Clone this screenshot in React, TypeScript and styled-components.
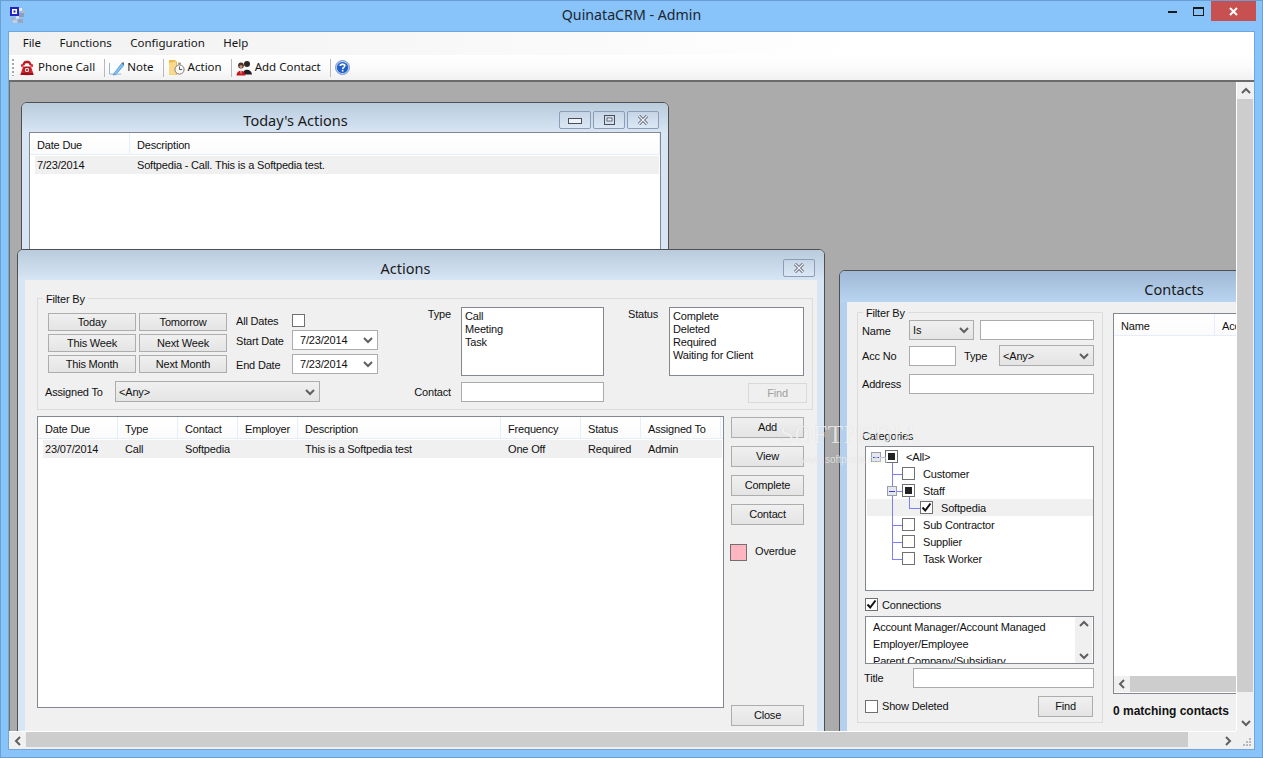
import React from 'react';
import styled, { createGlobalStyle } from 'styled-components';

const GlobalStyle = createGlobalStyle`
  html, body { margin: 0; padding: 0; height: 100%; overflow: hidden; }
  body { font-family: "Liberation Sans", Arial, sans-serif; font-size: 11px; letter-spacing: -0.18px; color: #111; }
  * { box-sizing: border-box; }
`;

const uiFont = `"Noto Sans", "Liberation Sans", sans-serif`;

const AppFrame = styled.div`
  position: relative;
  width: 1263px;
  height: 758px;
  background: #88c3f9;
  border: 1px solid #6a9fd4;
  display: flex;
  flex-direction: column;
  overflow: hidden;
`;

const TitleBar = styled.div`
  height: 30px;
  display: flex;
  align-items: flex-start;
  flex: none;
`;

const AppIcon = styled.svg`
  width: 17px;
  height: 17px;
  margin: 6px 0 0 8px;
  flex: none;
`;

const AppTitle = styled.div`
  flex: 1;
  text-align: center;
  font: 14.2px/28px ${uiFont};
  letter-spacing: 0;
  padding-left: 78px;
  color: #1c2530;
`;

const CaptionButtons = styled.div`
  display: flex;
  align-items: flex-start;
  margin-right: 6px;
`;

const CaptionButton = styled.div<{ $close?: boolean }>`
  width: ${p => (p.$close ? 45 : 26)}px;
  height: 20px;
  display: flex;
  align-items: center;
  justify-content: center;
  background: ${p => (p.$close ? '#c75050' : 'transparent')};
`;

const Client = styled.div`
  flex: 1;
  margin: 0 7px 7px 7px;
  border: 1px solid #6fa6dc;
  background: #f0f0f0;
  display: flex;
  flex-direction: column;
  min-height: 0;
`;

const MenuBar = styled.div`
  height: 23px;
  display: flex;
  align-items: flex-start;
  padding-left: 4.5px;
  background: linear-gradient(90deg, #f1f1f1, #ffffff 70%);
  flex: none;
`;

const MenuItem = styled.div`
  padding: 0 9.2px;
  font: 11.5px/21px ${uiFont};
  letter-spacing: 0;
  color: #151515;
`;

const ToolBar = styled.div`
  height: 25px;
  display: flex;
  align-items: center;
  padding-left: 3px;
  background: linear-gradient(#ffffff, #fbfbfb 50%, #f1f1f1);
  border-radius: 0 0 3px 3px;
  flex: none;
`;

const Grip = styled.div`
  width: 2px;
  height: 17px;
  margin-right: 6px;
  background: repeating-linear-gradient(#a9a9a9 0 2px, transparent 2px 4px);
`;

const ToolItem = styled.div`
  display: flex;
  align-items: center;
  gap: 3px;
  font: 11.5px/20px ${uiFont};
  letter-spacing: 0;
  color: #151515;
`;

const ToolLabel = styled.span`
  margin-top: -2px;
`;

const ToolSep = styled.div`
  width: 1px;
  height: 18px;
  background: #b9b9b9;
  margin: 0 4px 0 9px;
`;

const MdiArea = styled.div`
  flex: 1;
  min-height: 0;
  display: grid;
  grid-template-columns: 1fr 18px;
  grid-template-rows: 1fr 18px;
  border-top: 2px solid #6b6b6b;
  background: #f0f0f0;
`;

const Desktop = styled.div`
  position: relative;
  overflow: hidden;
  background: #ababab;
  border-left: 1px solid #6f6f6f;
`;

const VScroll = styled.div`
  display: flex;
  flex-direction: column;
  background: #f0f0f0;
  border-left: 1px solid #fff;
  padding-right: 1px;
`;

const HScroll = styled.div`
  display: flex;
  background: #f0f0f0;
  border-top: 1px solid #fff;
  padding-bottom: 2px;
`;

const ArrowBox = styled.div<{ $size?: number }>`
  flex: none;
  width: ${p => p.$size ?? 17}px;
  height: ${p => p.$size ?? 17}px;
  display: flex;
  align-items: center;
  justify-content: center;
  background: #f0f0f0;
`;

const Thumb = styled.div<{ $len: number; $vertical?: boolean }>`
  background: #cdcdcd;
  flex: none;
  ${p => (p.$vertical ? `height: ${p.$len}px;` : `width: ${p.$len}px;`)}
`;

const Spring = styled.div`
  flex: 1;
`;

const TrackFill = styled.div`
  flex: 1;
  background: #cdcdcd;
`;

const CornerGrip = styled.div`
  display: flex;
  align-items: flex-end;
  justify-content: flex-end;
  padding: 0 3px 3px 0;
`;

const MdiWindow = styled.div<{ $left: number; $top: number; $w: number; $h: number; $active?: boolean }>`
  position: absolute;
  left: ${p => p.$left}px;
  top: ${p => p.$top}px;
  width: ${p => p.$w}px;
  height: ${p => p.$h}px;
  border: 1px solid #4f4f4f;
  border-radius: 6px 6px 0 0;
  background: ${p => (p.$active ? '#b5d0ee' : '#d7e5f4')};
  display: flex;
  flex-direction: column;
  padding: 0 7px;
`;

const WindowHead = styled.div<{ $active?: boolean; $h: number }>`
  height: ${p => p.$h}px;
  margin: 0 -7px;
  padding: 0 9px 0 0;
  flex: none;
  display: flex;
  align-items: flex-start;
  border-radius: 5px 5px 0 0;
  background: ${p => (p.$active
    ? 'linear-gradient(#9fb8d5, #b9d4f0)'
    : 'linear-gradient(#b9cbdc, #d7e5f4)')};
`;

const WindowTitle = styled.div<{ $shift?: number; $lh?: number }>`
  flex: 1;
  text-align: center;
  padding-left: 10px;
  padding-right: ${p => p.$shift ?? 0}px;
  font: 14.5px/${p => p.$lh ?? 34}px ${uiFont};
  letter-spacing: 0;
  color: #1a1a1a;
`;

const WindowButtons = styled.div<{ $top: number }>`
  display: flex;
  gap: 2px;
  margin-top: ${p => p.$top}px;
`;

const WindowButton = styled.div`
  width: 32px;
  height: 18px;
  border: 1px solid #8d9db8;
  border-radius: 2px;
  background: linear-gradient(#c6d5e6, #dbe7f4);
  display: flex;
  align-items: center;
  justify-content: center;
`;

const Body = styled.div<{ $pad: string }>`
  flex: 1;
  min-height: 0;
  background: #f0f0f0;
  padding: ${p => p.$pad};
`;

const Group = styled.div<{ $w: number; $h: number }>`
  position: relative;
  flex: none;
  width: ${p => p.$w}px;
  height: ${p => p.$h}px;
  border: 1px solid #dcdcdc;
`;

const Legend = styled.span`
  position: absolute;
  top: -7px;
  left: 5px;
  padding: 0 3px;
  background: #f0f0f0;
  line-height: 14px;
`;

const ActionsFilter = styled.div`
  display: flex;
  height: 100%;
  padding-left: 7px;
`;

const DatesColumn = styled.div`
  width: 333px;
  flex: none;
  padding-top: 14px;
`;

const DatesRow = styled.div`
  display: flex;
  margin-left: 3px;
`;

const QuickButtons = styled.div`
  display: grid;
  grid-template-columns: 88px 88px;
  grid-template-rows: repeat(3, 18px);
  gap: 3px;
`;

const DateFields = styled.div`
  display: grid;
  grid-template-columns: 56px 86px;
  grid-template-rows: 13px 20px 20px;
  row-gap: 4px;
  margin-left: 9px;
  align-items: center;
`;

const AssignedRow = styled.div`
  display: flex;
  align-items: center;
  margin-top: 7px;
`;

const FieldLabel = styled.label<{ $w?: number; $right?: boolean; $pad?: string }>`
  flex: none;
  ${p => (p.$w ? `width: ${p.$w}px;` : '')}
  ${p => (p.$right ? 'text-align: right;' : '')}
  ${p => (p.$pad ? `padding: ${p.$pad};` : '')}
  white-space: nowrap;
`;

const TypeStatusGrid = styled.div`
  display: grid;
  grid-template-columns: 83px 143px 65px 135px;
  grid-template-rows: 69px 20px;
  row-gap: 6px;
  margin-top: 8px;
`;

const WinButton = styled.div<{ $w?: number; $h?: number; $disabled?: boolean }>`
  ${p => (p.$w ? `width: ${p.$w}px;` : '')}
  ${p => (p.$h ? `height: ${p.$h}px;` : '')}
  flex: none;
  display: flex;
  align-items: center;
  justify-content: center;
  border: 1px solid ${p => (p.$disabled ? '#d9d9d9' : '#adadad')};
  background: ${p => (p.$disabled ? '#efefef' : 'linear-gradient(#f0f0f0, #e4e4e4)')};
  color: ${p => (p.$disabled ? '#a0a0a0' : '#111')};
`;

const FindSlot = styled.div`
  justify-self: end;
  margin-right: -3px;
  margin-top: 1px;
`;

const ListBox = styled.div`
  border: 1px solid #828790;
  background: #fff;
  padding: 2px 3px;
  line-height: 13px;
`;

const TextBox = styled.div<{ $w?: number; $h?: number; $ml?: number }>`
  ${p => (p.$w ? `width: ${p.$w}px;` : '')}
  height: ${p => p.$h ?? 20}px;
  margin-left: ${p => p.$ml ?? 0}px;
  flex: none;
  background: #fff;
  border: 1px solid #ababab;
`;

const Select = styled.div<{ $w?: number; $h?: number; $flat?: boolean }>`
  ${p => (p.$w ? `width: ${p.$w}px;` : '')}
  height: ${p => p.$h ?? 20}px;
  flex: none;
  display: flex;
  align-items: center;
  justify-content: space-between;
  padding: 0 4px 0 ${p => (p.$flat ? 7 : 3)}px;
  border: 1px solid #acacac;
  background: ${p => (p.$flat ? '#fff' : 'linear-gradient(#f0f0f0, #e4e4e4)')};
`;

const CheckBox = styled.div<{ $mt?: number }>`
  width: 13px;
  height: 13px;
  flex: none;
  border: 1px solid #707070;
  background: #fff;
  display: flex;
  align-items: center;
  justify-content: center;
  ${p => (p.$mt ? `margin-top: ${p.$mt}px;` : '')}
`;

const LowerRow = styled.div`
  display: flex;
  height: 310px;
  margin-top: 6px;
`;

const SideButtons = styled.div`
  display: flex;
  flex-direction: column;
  width: 73px;
  margin-left: 7px;
  padding-top: 1px;
  gap: 8px;
`;

const SideButton = styled(WinButton)`
  height: 21px;
  padding-bottom: 2px;
`;

const CloseSlot = styled.div`
  margin-top: auto;
`;

const OverdueRow = styled.div`
  display: flex;
  align-items: center;
  gap: 8px;
  margin: 11px 0 0 -1px;
`;

const OverdueText = styled.span`
  padding-bottom: 3px;
`;

const Swatch = styled.div`
  width: 17px;
  height: 17px;
  background: #ffb6c1;
  border: 1px solid #707070;
`;

const ListView = styled.div<{ $w: number; $h: number }>`
  flex: none;
  width: ${p => p.$w}px;
  height: ${p => p.$h}px;
  border: 1px solid #828790;
  background: #fff;
  position: relative;
  overflow: hidden;
`;

const ListHead = styled.div`
  display: flex;
  height: 22px;
  background: linear-gradient(#ffffff, #fbfbfb);
  border-bottom: 1px solid #e7eefb;
`;

const HeadCell = styled.div<{ $w: number }>`
  width: ${p => p.$w}px;
  flex: none;
  padding: 2px 0 0 7px;
  line-height: 21px;
  border-right: 1px solid #e7eefb;
  white-space: nowrap;
`;

const ListRow = styled.div`
  display: flex;
  height: 18px;
  margin: 1px 1px 0 0;
  background: linear-gradient(90deg, transparent 5px, #f0f0f0 5px);
`;

const RowCell = styled.div<{ $w: number }>`
  width: ${p => p.$w}px;
  flex: none;
  padding-left: 7px;
  line-height: 18px;
  white-space: nowrap;
`;

const ContactsBody = styled.div`
  display: flex;
`;

const ContactsFilter = styled.div`
  display: flex;
  flex-direction: column;
  height: 100%;
  padding: 7px 0 0 4px;
`;

const FormRow = styled.div<{ $mt?: number; $gap?: number; $ml?: number }>`
  display: flex;
  align-items: center;
  margin-top: ${p => p.$mt ?? 0}px;
  margin-left: ${p => p.$ml ?? 0}px;
  gap: ${p => p.$gap ?? 0}px;
`;

const CategoriesLabel = styled.div`
  margin-top: 35px;
  line-height: 14px;
`;

const Tree = styled.div`
  position: relative;
  width: 229px;
  height: 145px;
  margin: 3px 0 0 3px;
  padding-top: 1px;
  border: 1px solid #828790;
  background: #fff;
`;

const TreeLines = styled.svg`
  position: absolute;
  left: 0;
  top: 0;
  pointer-events: none;
`;

const TreeRow = styled.div<{ $indent: number; $selected?: boolean }>`
  display: flex;
  align-items: center;
  gap: 8px;
  height: 17px;
  padding-left: ${p => p.$indent}px;
  background: ${p => (p.$selected ? 'linear-gradient(90deg, transparent 1px, #f0f0f0 1px)' : 'transparent')};
`;

const IndentedRow = styled(FormRow)`
  margin-left: 3px;
  width: 229px;
`;

const FindButton = styled(WinButton)`
  margin-right: 1px;
  padding-bottom: 2px;
`;

const ConnList = styled.div`
  display: flex;
  width: 229px;
  height: 48px;
  margin: 5px 0 0 3px;
  border: 1px solid #828790;
  background: #fff;
  overflow: hidden;
`;

const ConnItems = styled.div`
  flex: 1;
  padding: 2px 0 0 7px;
  line-height: 17px;
  white-space: nowrap;
`;

const ConnScroll = styled.div`
  width: 17px;
  margin-right: 1px;
  display: flex;
  flex-direction: column;
  justify-content: space-between;
  align-items: center;
  padding: 3px 0;
  background: #f0f0f0;
`;

const ContactsRight = styled.div`
  margin-left: 10px;
  padding-top: 1px;
`;

const ListScroll = styled.div`
  position: absolute;
  left: 0;
  right: 0;
  bottom: 1px;
  height: 16px;
  display: flex;
  background: #f0f0f0;
`;

const MatchText = styled.div`
  margin-top: 10px;
  font-size: 12px;
  letter-spacing: 0;
  font-weight: bold;
  line-height: 14px;
`;

const Watermark = styled.div`
  position: absolute;
  left: 779px;
  top: 421px;
  pointer-events: none;
  color: rgba(255, 255, 255, 0.72);
  text-shadow: 0 0 1px rgba(0, 0, 0, 0.14);
  font: 25px/26px "Liberation Serif", serif;
  letter-spacing: 0.6px;
  small {
    display: block;
    font: 10px/12px "Liberation Sans", sans-serif;
    margin: 6px 0 0 21px;
    letter-spacing: 0;
  }
`;

type Dir = 'up' | 'down' | 'left' | 'right';

const arrowPaths: Record<Dir, string> = {
  up: 'M1 6 L5 2 L9 6',
  down: 'M1 2 L5 6 L9 2',
  left: 'M6 1 L2 5 L6 9',
  right: 'M2 1 L6 5 L2 9',
};

function Arrow({ dir, color = '#606060' }: { dir: Dir; color?: string }) {
  const horiz = dir === 'left' || dir === 'right';
  return (
    <svg width={horiz ? 8 : 10} height={horiz ? 10 : 8} viewBox={horiz ? '0 0 8 10' : '0 0 10 8'}>
      <path d={arrowPaths[dir]} fill="none" stroke={color} strokeWidth="2" />
    </svg>
  );
}

function Tick() {
  return (
    <svg width="11" height="11" viewBox="0 0 11 11">
      <path d="M1.5 5.5 L4.2 8.5 L9.5 1.5" fill="none" stroke="#111" strokeWidth="2" />
    </svg>
  );
}

function Dot() {
  return <svg width="7" height="7"><rect width="7" height="7" fill="#222" /></svg>;
}

function CloseGlyph() {
  return (
    <svg width="12" height="10" viewBox="0 0 12 10">
      <path d="M2 1 L10 9 M10 1 L2 9" stroke="#555b68" strokeWidth="3" />
      <path d="M2 1 L10 9 M10 1 L2 9" stroke="#eef2f8" strokeWidth="1.4" />
    </svg>
  );
}

function PhoneIcon() {
  return (
    <svg width="15" height="16" viewBox="0 0 15 16">
      <path d="M3 5 C3 1.5 4.5 1 7 1 C9.5 1 11 1.5 11 5 L9.5 5 C9.5 3.5 9 3 7 3 C5 3 4.5 3.5 4.5 5 Z" fill="#c6121c" stroke="#8e0c13" strokeWidth="0.5" />
      <path d="M1 4.5 L3.5 3.5 L3.5 6.5 L1 7 Z M13 4.5 L10.5 3.5 L10.5 6.5 L13 7 Z" fill="#e02a32" />
      <path d="M3 6.5 L11 6.5 L13.5 14.5 Q7 16 0.5 14.5 Z" fill="#d81e28" />
      <path d="M1 13 H13 L13.5 15 H0.5 Z" fill="#9d1019" />
      <circle cx="7" cy="10" r="2.8" fill="#f7d0d0" stroke="#7a0e14" strokeWidth="0.9" />
      <circle cx="7" cy="10" r="1" fill="#b5141c" />
    </svg>
  );
}

function NoteIcon() {
  return (
    <svg width="15" height="16" viewBox="0 0 16 16">
      <rect x="1" y="3" width="11" height="11" fill="#fcfdff" />
      <path d="M0.5 2.5 V14.5 H13" fill="none" stroke="#8fb0d4" />
      <path d="M5 14 L13.5 3 L16 5 L7.5 15 L4.5 15.5 Z" fill="#7fc0ee" stroke="#3d80c0" strokeWidth="0.6" />
      <path d="M13.5 3 L16 5 L16 2.5 L15 1.5 Z" fill="#5a6a7a" />
    </svg>
  );
}

function ActionIcon() {
  return (
    <svg width="17" height="17" viewBox="0 0 17 17">
      <path d="M1 1 H7 L9 3 V16 H1 Z" fill="#f0b850" />
      <path d="M1 4 L8 2.5 V15.5 L1 16 Z" fill="#fbd98a" />
      <circle cx="11.5" cy="10.5" r="4.6" fill="#f8f8f8" stroke="#7c7c7c" />
      <path d="M11.5 7.5 V10.5 H14.2" fill="none" stroke="#555" />
      <rect x="10.3" y="3.6" width="2.4" height="2" fill="#8a8a8a" />
    </svg>
  );
}

function ContactIcon() {
  return (
    <svg width="16" height="16" viewBox="0 0 16 16">
      <circle cx="11" cy="4" r="3" fill="#2e2622" />
      <path d="M6.5 14.5 C6.5 8 15.5 8 16 14.5 Z" fill="#1d1d22" />
      <circle cx="5" cy="5.5" r="2.9" fill="#4a3228" />
      <circle cx="5" cy="6.6" r="1.6" fill="#c99078" />
      <path d="M0.5 15.5 C0.5 9 9 9 9.5 15.5 Z" fill="#c4161f" />
      <path d="M4.2 9.5 L5 15 L5.8 9.5 Z" fill="#f3e4e4" />
    </svg>
  );
}

function HelpIcon() {
  return (
    <svg width="15" height="15" viewBox="0 0 15 15">
      <circle cx="7.5" cy="7.5" r="7" fill="#bdcdea" stroke="#5f86c8" strokeWidth="0.8" />
      <circle cx="7.5" cy="7.5" r="5.6" fill="#1f5fc8" />
      <path d="M3 6 A5 5 0 0 1 12 6 Q7.5 4.4 3 6 Z" fill="#6fa2ea" />
      <path d="M5.4 5.9 C5.6 3.6 9.7 3.6 9.7 5.9 C9.7 7.4 7.6 7.3 7.6 9" fill="none" stroke="#fff" strokeWidth="1.5" />
      <rect x="6.8" y="9.8" width="1.7" height="1.7" fill="#fff" />
    </svg>
  );
}

const actionColumns = [
  ['Date Due', 80, '23/07/2014'],
  ['Type', 60, 'Call'],
  ['Contact', 60, 'Softpedia'],
  ['Employer', 60, ''],
  ['Description', 203, 'This is a Softpedia test'],
  ['Frequency', 80, 'One Off'],
  ['Status', 60, 'Required'],
  ['Assigned To', 80, 'Admin'],
] as const;

const todayColumns = [
  ['Date Due', 100, '7/23/2014'],
  ['Description', 530, 'Softpedia - Call. This is a Softpedia test.'],
] as const;

const treeItems = [
  { label: '<All>', indent: 19, mark: 'dot' },
  { label: 'Customer', indent: 36 },
  { label: 'Staff', indent: 36, mark: 'dot' },
  { label: 'Softpedia', indent: 54, mark: 'tick', selected: true },
  { label: 'Sub Contractor', indent: 36 },
  { label: 'Supplier', indent: 36 },
  { label: 'Task Worker', indent: 36 },
];

export default function App() {
  return (
    <>
      <GlobalStyle />
      <AppFrame>
        <TitleBar>
          <AppIcon viewBox="0 0 17 17">
            <rect x="1" y="0" width="9" height="9" fill="#2424c4" />
            <rect x="3" y="2" width="5" height="5" fill="#fff" />
            <rect x="4.5" y="3.5" width="2" height="2" fill="#2424c4" />
            <rect x="10" y="1" width="3" height="3" fill="#e8eaf0" />
            <rect x="13" y="3" width="3" height="3" fill="#b4bccc" />
            <rect x="10" y="6" width="5" height="4" fill="#8f9db8" />
            <rect x="2" y="10" width="4" height="3" fill="#a8b0c4" />
            <rect x="7" y="9" width="3" height="3" fill="#d8dce8" />
            <rect x="4" y="13" width="4" height="3" fill="#c8cedc" />
            <rect x="9" y="12" width="5" height="4" fill="#9aa6c0" />
          </AppIcon>
          <AppTitle>QuinataCRM - Admin</AppTitle>
          <CaptionButtons>
            <CaptionButton>
              <svg width="9" height="3"><rect width="9" height="2" y="1" fill="#1b1b1b" /></svg>
            </CaptionButton>
            <CaptionButton>
              <svg width="11" height="9"><rect x="0.5" y="0.5" width="10" height="8" fill="none" stroke="#1b1b1b" /><rect width="11" height="2" fill="#1b1b1b" /></svg>
            </CaptionButton>
            <CaptionButton $close>
              <svg width="9" height="9" viewBox="0 0 9 9"><path d="M1 1 L8 8 M8 1 L1 8" stroke="#fff" strokeWidth="2" /></svg>
            </CaptionButton>
          </CaptionButtons>
        </TitleBar>

        <Client>
          <MenuBar>
            <MenuItem>File</MenuItem>
            <MenuItem>Functions</MenuItem>
            <MenuItem>Configuration</MenuItem>
            <MenuItem>Help</MenuItem>
          </MenuBar>
          <ToolBar>
            <Grip />
            <ToolItem><PhoneIcon /><ToolLabel>Phone Call</ToolLabel></ToolItem>
            <ToolSep />
            <ToolItem><NoteIcon /><ToolLabel>Note</ToolLabel></ToolItem>
            <ToolSep />
            <ToolItem><ActionIcon /><ToolLabel>Action</ToolLabel></ToolItem>
            <ToolSep />
            <ToolItem><ContactIcon /><ToolLabel>Add Contact</ToolLabel></ToolItem>
            <ToolSep />
            <ToolItem><HelpIcon /></ToolItem>
          </ToolBar>

          <MdiArea>
            <Desktop>
              <MdiWindow $left={11} $top={20} $w={648} $h={200}>
                <WindowHead $h={29}>
                  <WindowTitle $lh={34}>Today's Actions</WindowTitle>
                  <WindowButtons $top={8}>
                    <WindowButton>
                      <svg width="14" height="7"><rect x="0.5" y="1.5" width="13" height="5" fill="#eef2f8" stroke="#4a4f5c" /></svg>
                    </WindowButton>
                    <WindowButton>
                      <svg width="11" height="10"><rect x="0.5" y="0.5" width="10" height="9" fill="none" stroke="#4a4f5c" /><rect x="3" y="3" width="5" height="3" fill="#eef2f8" stroke="#4a4f5c" strokeWidth="0.8" /></svg>
                    </WindowButton>
                    <WindowButton><CloseGlyph /></WindowButton>
                  </WindowButtons>
                </WindowHead>
                <ListView $w={632} $h={170}>
                  <ListHead>
                    {todayColumns.map(c => <HeadCell key={c[0]} $w={c[1]}>{c[0]}</HeadCell>)}
                  </ListHead>
                  <ListRow>
                    {todayColumns.map(c => <RowCell key={c[0]} $w={c[1]}>{c[2]}</RowCell>)}
                  </ListRow>
                </ListView>
              </MdiWindow>

              <MdiWindow $left={7} $top={167} $w={808} $h={520}>
                <WindowHead $h={30}>
                  <WindowTitle $lh={36}>Actions</WindowTitle>
                  <WindowButtons $top={9}>
                    <WindowButton><CloseGlyph /></WindowButton>
                  </WindowButtons>
                </WindowHead>
                <Body $pad="18px 4px 0 12px">
                  <Group $w={776} $h={112}>
                    <Legend>Filter By</Legend>
                    <ActionsFilter>
                      <DatesColumn>
                        <DatesRow>
                          <QuickButtons>
                            <WinButton>Today</WinButton>
                            <WinButton>Tomorrow</WinButton>
                            <WinButton>This Week</WinButton>
                            <WinButton>Next Week</WinButton>
                            <WinButton>This Month</WinButton>
                            <WinButton>Next Month</WinButton>
                          </QuickButtons>
                          <DateFields>
                            <FieldLabel $pad="2px 0 0 0">All Dates</FieldLabel>
                            <CheckBox $mt={1} />
                            <FieldLabel $pad="2px 0 0 0">Start Date</FieldLabel>
                            <Select $flat>7/23/2014<Arrow dir="down" /></Select>
                            <FieldLabel $pad="2px 0 0 0">End Date</FieldLabel>
                            <Select $flat>7/23/2014<Arrow dir="down" /></Select>
                          </DateFields>
                        </DatesRow>
                        <AssignedRow>
                          <FieldLabel $w={70}>Assigned To</FieldLabel>
                          <Select $w={205} $h={21}>&lt;Any&gt;<Arrow dir="down" /></Select>
                        </AssignedRow>
                      </DatesColumn>
                      <TypeStatusGrid>
                        <FieldLabel $right $pad="1px 10px 0 0">Type</FieldLabel>
                        <ListBox>Call<br />Meeting<br />Task</ListBox>
                        <FieldLabel $pad="1px 0 0 24px">Status</FieldLabel>
                        <ListBox>Complete<br />Deleted<br />Required<br />Waiting for Client</ListBox>
                        <FieldLabel $right $pad="4px 10px 0 0">Contact</FieldLabel>
                        <TextBox />
                        <span />
                        <FindSlot><WinButton $w={59} $h={20} $disabled>Find</WinButton></FindSlot>
                      </TypeStatusGrid>
                    </ActionsFilter>
                  </Group>
                  <LowerRow>
                    <ListView $w={687} $h={292}>
                      <ListHead>
                        {actionColumns.map(c => <HeadCell key={c[0]} $w={c[1]}>{c[0]}</HeadCell>)}
                      </ListHead>
                      <ListRow>
                        {actionColumns.map(c => <RowCell key={c[0]} $w={c[1]}>{c[2]}</RowCell>)}
                      </ListRow>
                    </ListView>
                    <SideButtons>
                      <SideButton>Add</SideButton>
                      <SideButton>View</SideButton>
                      <SideButton>Complete</SideButton>
                      <SideButton>Contact</SideButton>
                      <OverdueRow><Swatch /><OverdueText>Overdue</OverdueText></OverdueRow>
                      <CloseSlot><SideButton>Close</SideButton></CloseSlot>
                    </SideButtons>
                  </LowerRow>
                </Body>
              </MdiWindow>

              <MdiWindow $left={829} $top={188} $w={700} $h={499} $active>
                <WindowHead $active $h={31}>
                  <WindowTitle $shift={31} $lh={36}>Contacts</WindowTitle>
                </WindowHead>
                <Body $pad="10px 0 0 10px">
                  <ContactsBody>
                    <Group $w={246} $h={411}>
                      <Legend>Filter By</Legend>
                      <ContactsFilter>
                        <FormRow>
                          <FieldLabel $w={47} $pad="2px 0 0 0">Name</FieldLabel>
                          <Select $w={65}>Is<Arrow dir="down" /></Select>
                          <TextBox $w={114} $ml={6} />
                        </FormRow>
                        <FormRow $mt={5}>
                          <FieldLabel $w={47}>Acc No</FieldLabel>
                          <TextBox $w={47} />
                          <FieldLabel $w={43} $pad="0 0 0 8px">Type</FieldLabel>
                          <Select $w={95} $h={21}>&lt;Any&gt;<Arrow dir="down" /></Select>
                        </FormRow>
                        <FormRow $mt={8}>
                          <FieldLabel $w={47}>Address</FieldLabel>
                          <TextBox $w={185} />
                        </FormRow>
                        <CategoriesLabel>Categories</CategoriesLabel>
                        <Tree>
                          <TreeLines width="227" height="143" viewBox="0 0 227 143">
                            <g stroke="#7d7dfa" fill="none" shapeRendering="crispEdges">
                              <path d="M26.5 16 V112.5 M26.5 27.5 H36 M26.5 78.5 H36 M26.5 95.5 H36 M26.5 112.5 H36 M43.5 50 V61.5 H54 M15 10.5 H19 M31 44.5 H36" />
                            </g>
                            <g shapeRendering="crispEdges">
                              <rect x="5.5" y="5.5" width="9" height="9" fill="#e4e8ee" stroke="#9aa0a8" />
                              <path d="M7 10.5 H13" stroke="#3c3cd0" />
                              <rect x="21.5" y="39.5" width="9" height="9" fill="#e4e8ee" stroke="#9aa0a8" />
                              <path d="M23 44.5 H29" stroke="#3c3cd0" />
                            </g>
                          </TreeLines>
                          {treeItems.map(item => (
                            <TreeRow key={item.label} $indent={item.indent} $selected={item.selected}>
                              <CheckBox>
                                {item.mark === 'dot' && <Dot />}
                                {item.mark === 'tick' && <Tick />}
                              </CheckBox>
                              {item.label}
                            </TreeRow>
                          ))}
                        </Tree>
                        <IndentedRow $mt={7} $gap={4}>
                          <CheckBox><Tick /></CheckBox>Connections
                        </IndentedRow>
                        <ConnList>
                          <ConnItems>
                            Account Manager/Account Managed<br />
                            Employer/Employee<br />
                            Parent Company/Subsidiary
                          </ConnItems>
                          <ConnScroll>
                            <Arrow dir="up" />
                            <Arrow dir="down" />
                          </ConnScroll>
                        </ConnList>
                        <FormRow $mt={4} $ml={2}>
                          <FieldLabel $w={49}>Title</FieldLabel>
                          <TextBox $w={181} />
                        </FormRow>
                        <IndentedRow $mt={8} $gap={4}>
                          <CheckBox />
                          <FieldLabel $pad="0 0 2px 0">Show Deleted</FieldLabel>
                          <Spring />
                          <FindButton $w={55} $h={21}>Find</FindButton>
                        </IndentedRow>
                      </ContactsFilter>
                    </Group>
                    <ContactsRight>
                      <ListView $w={300} $h={381}>
                        <ListHead>
                          <HeadCell $w={101}>Name</HeadCell>
                          <HeadCell $w={100}>Acc No</HeadCell>
                        </ListHead>
                        <ListScroll>
                          <ArrowBox $size={16}><Arrow dir="left" /></ArrowBox>
                          <TrackFill />
                        </ListScroll>
                      </ListView>
                      <MatchText>0 matching contacts</MatchText>
                    </ContactsRight>
                  </ContactsBody>
                </Body>
              </MdiWindow>
            </Desktop>

            <VScroll>
              <ArrowBox><Arrow dir="up" /></ArrowBox>
              <Thumb $vertical $len={593} />
              <Spring />
              <ArrowBox><Arrow dir="down" /></ArrowBox>
            </VScroll>
            <HScroll>
              <ArrowBox><Arrow dir="left" /></ArrowBox>
              <Thumb $len={1162} />
              <Spring />
              <ArrowBox><Arrow dir="right" /></ArrowBox>
            </HScroll>
            <CornerGrip>
              <svg width="9" height="9" viewBox="0 0 9 9">
                <path d="M7 1 h2 v2 h-2 z M4 4 h2 v2 h-2 z M7 4 h2 v2 h-2 z M1 7 h2 v2 h-2 z M4 7 h2 v2 h-2 z M7 7 h2 v2 h-2 z" fill="#b8b8b8" />
              </svg>
            </CornerGrip>
          </MdiArea>
        </Client>
        <Watermark>
          SOFTPEDIA
          <small>www.softpedia.com</small>
        </Watermark>
      </AppFrame>
    </>
  );
}
